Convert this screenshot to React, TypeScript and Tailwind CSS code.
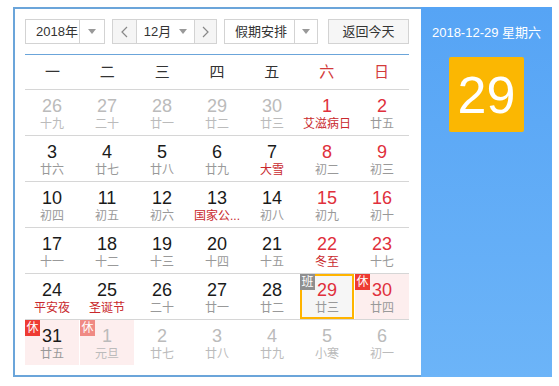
import React from 'react';

type Day = {
  d: number;
  l: string;
  other?: boolean;
  lred?: boolean;
  badge?: '休' | '班';
  rest?: boolean;
  sel?: boolean;
};

const weeks: Day[][] = [
  [
    { d: 26, l: '十九', other: true },
    { d: 27, l: '二十', other: true },
    { d: 28, l: '廿一', other: true },
    { d: 29, l: '廿二', other: true },
    { d: 30, l: '廿三', other: true },
    { d: 1, l: '艾滋病日', lred: true },
    { d: 2, l: '廿五' },
  ],
  [
    { d: 3, l: '廿六' },
    { d: 4, l: '廿七' },
    { d: 5, l: '廿八' },
    { d: 6, l: '廿九' },
    { d: 7, l: '大雪', lred: true },
    { d: 8, l: '初二' },
    { d: 9, l: '初三' },
  ],
  [
    { d: 10, l: '初四' },
    { d: 11, l: '初五' },
    { d: 12, l: '初六' },
    { d: 13, l: '国家公...', lred: true },
    { d: 14, l: '初八' },
    { d: 15, l: '初九' },
    { d: 16, l: '初十' },
  ],
  [
    { d: 17, l: '十一' },
    { d: 18, l: '十二' },
    { d: 19, l: '十三' },
    { d: 20, l: '十四' },
    { d: 21, l: '十五' },
    { d: 22, l: '冬至', lred: true },
    { d: 23, l: '十七' },
  ],
  [
    { d: 24, l: '平安夜', lred: true },
    { d: 25, l: '圣诞节', lred: true },
    { d: 26, l: '二十' },
    { d: 27, l: '廿一' },
    { d: 28, l: '廿二' },
    { d: 29, l: '廿三', badge: '班', sel: true },
    { d: 30, l: '廿四', badge: '休', rest: true },
  ],
  [
    { d: 31, l: '廿五', badge: '休', rest: true },
    { d: 1, l: '元旦', other: true, badge: '休', rest: true },
    { d: 2, l: '廿七', other: true },
    { d: 3, l: '廿八', other: true },
    { d: 4, l: '廿九', other: true },
    { d: 5, l: '小寒', other: true },
    { d: 6, l: '初一', other: true },
  ],
];

const weekdays = ['一', '二', '三', '四', '五', '六', '日'];

function Caret() {
  return (
    <svg width="8" height="5" viewBox="0 0 8 5">
      <path d="M0 0h8L4 5z" fill="#999" />
    </svg>
  );
}

function Chevron({ dir }: { dir: 'l' | 'r' }) {
  return (
    <svg width="7" height="12" viewBox="0 0 7 12">
      <polyline
        points={dir === 'l' ? '6,1 1,6 6,11' : '1,1 6,6 1,11'}
        fill="none"
        stroke="#888"
        strokeWidth="1.2"
      />
    </svg>
  );
}

function Cell({ day, col }: { day: Day; col: number }) {
  const weekend = col >= 5;
  const numColor = day.other ? 'text-[#bbbbbb]' : weekend ? 'text-[#e0303c]' : 'text-[#1a1a1a]';
  const lunarColor = day.lred ? 'text-[#c9282d]' : day.other ? 'text-[#bbbbbb]' : 'text-[#999999]';
  let box = 'border-2 border-transparent';
  if (day.sel) box = 'border-2 border-[#ffb400] bg-[#f6f6f6]';
  else if (day.rest) box = 'border-2 border-transparent bg-[#fdeeee]';
  return (
    <div className={`relative h-[45px] flex flex-col items-center pt-[4px] ${box}`}>
      {day.badge && (
        <span
          className={`absolute left-[-2px] top-[-2px] w-[15px] h-[16px] flex items-center justify-center text-[12px] leading-none text-white ${
            day.badge === '班' ? 'bg-[#8f8f8f]' : day.other ? 'bg-[#f08a84]' : 'bg-[#ee3b33]'
          }`}
        >
          {day.badge}
        </span>
      )}
      <span className={`text-[18px] leading-[20px] ${numColor}`}>{day.d}</span>
      <span className={`text-[12px] leading-[16px] whitespace-nowrap ${lunarColor}`}>{day.l}</span>
    </div>
  );
}

export default function App() {
  return (
    <div
      className="w-[559px] h-[386px] bg-white pl-[13px] pt-[7px]"
      style={{ fontFamily: '"Liberation Sans", "Noto Sans CJK SC", sans-serif' }}
    >
      <div className="flex h-[370px]">
        {/* calendar side */}
        <div className="w-[408px] h-full border-l-2 border-t-2 border-b-2 border-[#6ba5da] pl-[10px] pr-[12px] pt-[10px]">
          <div className="flex items-center h-[25px] text-[13px] text-[#333]">
            <div className="flex w-[80px] h-full border border-[#d3d3d3] bg-white">
              <div className="flex-1 flex items-center pl-[10px]">2018年</div>
              <div className="w-[25px] border-l border-[#d3d3d3] flex items-center justify-center">
                <Caret />
              </div>
            </div>
            <div className="flex w-[105px] h-full ml-[7px] border border-[#d3d3d3] bg-white">
              <div className="w-[23px] bg-[#f5f5f5] flex items-center justify-center">
                <Chevron dir="l" />
              </div>
              <div className="flex-1 border-l border-r border-[#d3d3d3] flex items-center justify-center gap-[8px]">
                <span>12月</span>
                <Caret />
              </div>
              <div className="w-[21px] bg-[#f5f5f5] flex items-center justify-center">
                <Chevron dir="r" />
              </div>
            </div>
            <div className="flex w-[94px] h-full ml-[7px] border border-[#d3d3d3] bg-white">
              <div className="flex-1 flex items-center pl-[10px]">假期安排</div>
              <div className="w-[23px] border-l border-[#d3d3d3] flex items-center justify-center">
                <Caret />
              </div>
            </div>
            <div className="w-[81px] h-full ml-[10px] border border-[#d3d3d3] bg-[#f6f6f6] flex items-center justify-center">
              返回今天
            </div>
          </div>

          <div className="mt-[10px] h-px bg-[#6ba5da]" />

          <div className="grid grid-cols-7 h-[34px] items-center text-[15px]">
            {weekdays.map((w, i) => (
              <div key={w} className={`text-center ${i >= 5 ? 'text-[#d33a3a]' : 'text-[#333]'}`}>
                {w}
              </div>
            ))}
          </div>

          {weeks.map((wk, r) => (
            <div key={r} className="border-t border-[#d6d6d6] grid grid-cols-7 gap-x-px">
              {wk.map((day, c) => (
                <Cell key={c} day={day} col={c} />
              ))}
            </div>
          ))}
        </div>

        {/* today panel */}
        <div className="w-[131px] h-full bg-gradient-to-b from-[#56a4f5] to-[#6cb4f8] flex flex-col items-center pt-[17px]">
          <div className="text-[13px] leading-[18px] text-white whitespace-nowrap">2018-12-29 星期六</div>
          <div className="mt-[15px] w-[75px] h-[75px] rounded-[2px] bg-[#fbb702] flex items-center justify-center text-white text-[52px] leading-none">
            29
          </div>
        </div>
      </div>
    </div>
  );
}
